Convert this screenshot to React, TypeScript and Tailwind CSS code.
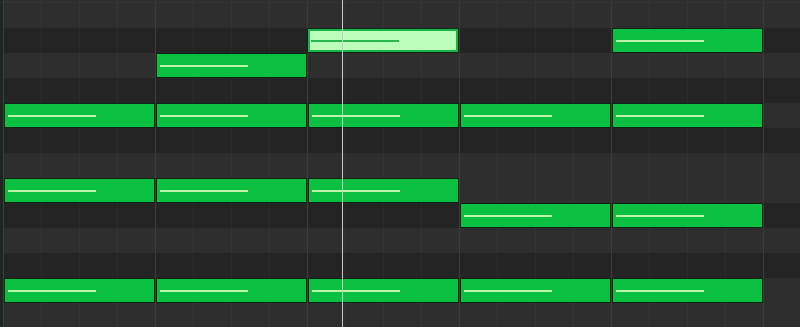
const ROW_H = 25;
const TOP = 3;
const BAR = 152;
const ORIGIN = 3;

// piano keys from top, B down to B; true = black key (dark row)
const keys = [
  { name: "B", black: false },
  { name: "A#", black: true },
  { name: "A", black: false },
  { name: "G#", black: true },
  { name: "G", black: false },
  { name: "F#", black: true },
  { name: "F", black: false },
  { name: "E", black: false },
  { name: "D#", black: true },
  { name: "D", black: false },
  { name: "C#", black: true },
  { name: "C", black: false },
  { name: "B", black: false },
];

type Note = { row: number; bar: number; selected?: boolean };

const notes: Note[] = [
  { row: 1, bar: 2, selected: true },
  { row: 1, bar: 4 },
  { row: 2, bar: 1 },
  ...[0, 1, 2, 3, 4].map((bar) => ({ row: 4, bar })),
  ...[0, 1, 2].map((bar) => ({ row: 7, bar })),
  { row: 8, bar: 3 },
  { row: 8, bar: 4 },
  ...[0, 1, 2, 3, 4].map((bar) => ({ row: 11, bar })),
];

function GridRow({ black, h }: { black: boolean; h: string }) {
  return (
    <div className={`flex shrink-0 ${h} ${black ? "bg-[#242424]" : "bg-[#2e2e2e]"}`}>
      <div className="w-[3px] shrink-0 bg-[#232323]" />
      {Array.from({ length: 21 }).map((_, i) => (
        <div
          key={i}
          className={`w-[38px] shrink-0 border-l ${
            i === 0
              ? "border-[#0e5a2a]"
              : i % 4 === 0
              ? "border-[#3c3c3c]"
              : black
              ? "border-[#2b2b2b]"
              : "border-[#353535]"
          }`}
        />
      ))}
    </div>
  );
}

function NoteBlock({ note }: { note: Note }) {
  const left = ORIGIN + note.bar * BAR + 1;
  const top = TOP + note.row * ROW_H;
  if (note.selected) {
    return (
      <div
        className="absolute h-[25px] w-[152px] border border-[#0d2a16] bg-[#1bb447] p-[2px]"
        style={{ left: left - 1, top }}
      >
        <div className="flex h-full w-full items-center bg-[#bbffbb] pl-[1px]">
          <div className="h-[2px] w-[88px] bg-[#27b84e]" />
        </div>
      </div>
    );
  }
  return (
    <div
      className="absolute flex h-[25px] w-[151px] items-center border border-[#0c2413] bg-[#0bbf41] pl-[3px]"
      style={{ left, top }}
    >
      <div className="h-[2px] w-[88px] bg-[#bdf3a8]" />
    </div>
  );
}

export default function App() {
  return (
    <div className="relative h-[327px] w-[800px] overflow-hidden bg-[#2b2b2b]">
      <div className="flex flex-col">
        <div className="border-b border-[#343434]">
          <GridRow black={false} h="h-[2px]" />
        </div>
        {keys.map((k, i) => (
          <GridRow key={i} black={k.black} h="h-[25px]" />
        ))}
      </div>

      {notes.map((n, i) => (
        <NoteBlock key={i} note={n} />
      ))}

      {/* playhead */}
      <div className="absolute left-[342px] top-0 h-full w-[1px] bg-[#c9c9c9]" />
    </div>
  );
}
